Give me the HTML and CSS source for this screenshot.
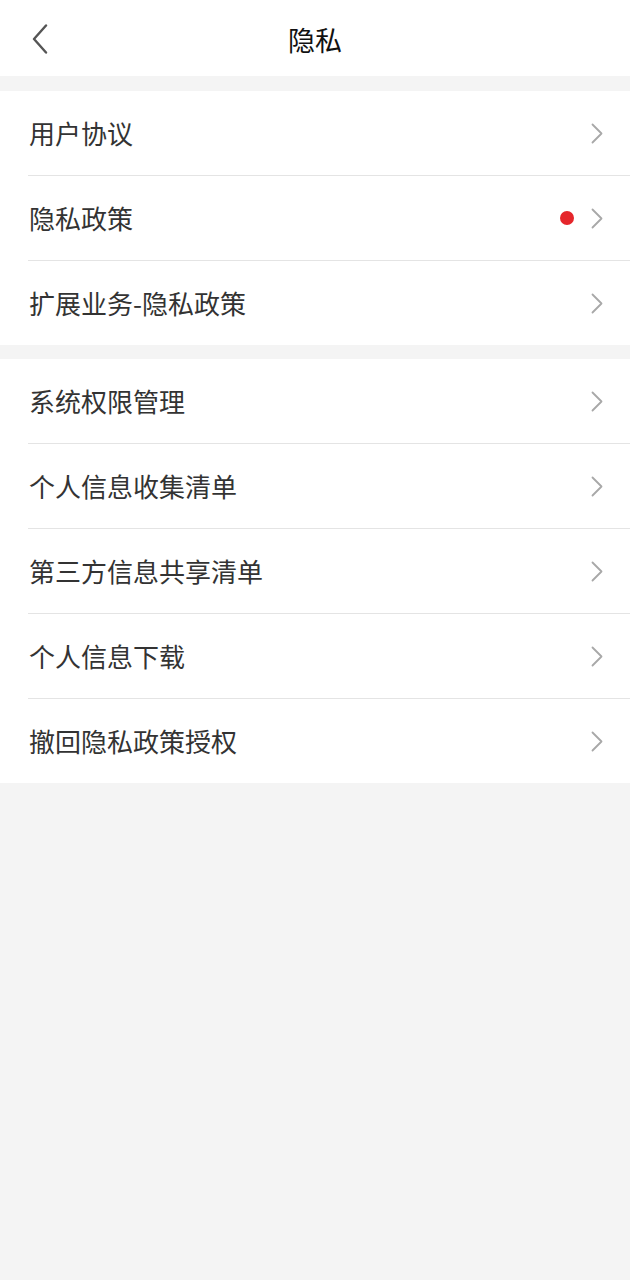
FILE: index.html
```html
<!DOCTYPE html>
<html lang="zh-CN">
<head>
<meta charset="utf-8">
<title>隐私</title>
<link rel="stylesheet" href="styles.css">
</head>
<body>
<header class="nav">
  <span class="back">
    <svg width="18" height="30" viewBox="0 0 18 30"><path d="M15 1.5 L3 15 L15 28.5" fill="none" stroke="#555" stroke-width="2.4" stroke-linecap="round" stroke-linejoin="round"/></svg>
  </span>
  <h1 class="title">隐私</h1>
</header>
<section class="group g1">
  <div class="row"><div class="inner"><span class="label">用户协议</span><span class="chev"><svg width="12" height="21" viewBox="0 0 12 21"><path d="M1.5 1.5 L10.5 10.5 L1.5 19.5" fill="none" stroke="#a8a8a8" stroke-width="1.8" stroke-linecap="round" stroke-linejoin="round"/></svg></span></div></div>
  <div class="row"><div class="inner"><span class="label">隐私政策</span><span class="dot"></span><span class="chev"><svg width="12" height="21" viewBox="0 0 12 21"><path d="M1.5 1.5 L10.5 10.5 L1.5 19.5" fill="none" stroke="#a8a8a8" stroke-width="1.8" stroke-linecap="round" stroke-linejoin="round"/></svg></span></div></div>
  <div class="row"><div class="inner"><span class="label">扩展业务-隐私政策</span><span class="chev"><svg width="12" height="21" viewBox="0 0 12 21"><path d="M1.5 1.5 L10.5 10.5 L1.5 19.5" fill="none" stroke="#a8a8a8" stroke-width="1.8" stroke-linecap="round" stroke-linejoin="round"/></svg></span></div></div>
</section>
<section class="group g2">
  <div class="row"><div class="inner"><span class="label">系统权限管理</span><span class="chev"><svg width="12" height="21" viewBox="0 0 12 21"><path d="M1.5 1.5 L10.5 10.5 L1.5 19.5" fill="none" stroke="#a8a8a8" stroke-width="1.8" stroke-linecap="round" stroke-linejoin="round"/></svg></span></div></div>
  <div class="row"><div class="inner"><span class="label">个人信息收集清单</span><span class="chev"><svg width="12" height="21" viewBox="0 0 12 21"><path d="M1.5 1.5 L10.5 10.5 L1.5 19.5" fill="none" stroke="#a8a8a8" stroke-width="1.8" stroke-linecap="round" stroke-linejoin="round"/></svg></span></div></div>
  <div class="row"><div class="inner"><span class="label">第三方信息共享清单</span><span class="chev"><svg width="12" height="21" viewBox="0 0 12 21"><path d="M1.5 1.5 L10.5 10.5 L1.5 19.5" fill="none" stroke="#a8a8a8" stroke-width="1.8" stroke-linecap="round" stroke-linejoin="round"/></svg></span></div></div>
  <div class="row"><div class="inner"><span class="label">个人信息下载</span><span class="chev"><svg width="12" height="21" viewBox="0 0 12 21"><path d="M1.5 1.5 L10.5 10.5 L1.5 19.5" fill="none" stroke="#a8a8a8" stroke-width="1.8" stroke-linecap="round" stroke-linejoin="round"/></svg></span></div></div>
  <div class="row"><div class="inner"><span class="label">撤回隐私政策授权</span><span class="chev"><svg width="12" height="21" viewBox="0 0 12 21"><path d="M1.5 1.5 L10.5 10.5 L1.5 19.5" fill="none" stroke="#a8a8a8" stroke-width="1.8" stroke-linecap="round" stroke-linejoin="round"/></svg></span></div></div>
</section>
</body>
</html>
```
FILE: styles.css
```css
html, body {
  margin: 0;
  padding: 0;
}
body {
  background: #f4f4f4;
  font-family: "Noto Sans CJK SC", "Noto Sans", sans-serif;
  min-height: 1280px;
}
.nav {
  height: 76px;
  background: #fff;
  display: flex;
  align-items: center;
  justify-content: center;
  position: relative;
}
.back {
  position: absolute;
  left: 31px;
  top: 24px;
  display: flex;
}
.title {
  margin: 0;
  font-size: 27px;
  font-weight: 400;
  color: #111;
  line-height: 1;
  margin-top: 2px;
}
.group {
  background: #fff;
}
.g1 { margin-top: 15px; }
.g2 { margin-top: 14px; }
.row {
  padding-left: 28px;
}
.inner {
  height: 84px;
  display: flex;
  align-items: center;
  padding-right: 27px;
  border-top: 1px solid #e4e4e4;
}
.row:first-child .inner {
  border-top: none;
}
.label {
  flex: 1;
  font-size: 26px;
  color: #333;
  line-height: 1;
  padding-left: 1px;
}
.dot {
  width: 14px;
  height: 14px;
  border-radius: 50%;
  background: #e5262b;
  margin-right: 17px;
}
.chev {
  display: flex;
}
```
